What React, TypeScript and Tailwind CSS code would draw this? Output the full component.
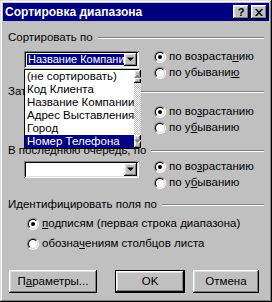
import React from 'react';

const raised =
  'shadow-[inset_-1px_-1px_#000,inset_1px_1px_#fff,inset_-2px_-2px_#808080,inset_2px_2px_#dfdfdf]';
const sunken =
  'shadow-[inset_1px_1px_#808080,inset_-1px_-1px_#fff,inset_2px_2px_#000,inset_-2px_-2px_#dfdfdf]';

const items = [
  '(не сортировать)',
  'Код Клиента',
  'Название Компании',
  'Адрес Выставления',
  'Город',
  'Номер Телефона',
];

const Arrow = ({ up = false, gray = false }: { up?: boolean; gray?: boolean }) => (
  <svg width="7" height="5" viewBox="0 0 7 5" className="block">
    {gray && <path d={up ? 'M1 5h7L4.5 1.5z' : 'M1 1h7L4.5 4.5z'} fill="#fff" />}
    <path d={up ? 'M0 4h7L3.5 0.5z' : 'M0 0.5h7L3.5 4z'} fill={gray ? '#808080' : '#000'} />
  </svg>
);

const Radio = ({ checked, children }: { checked?: boolean; children: React.ReactNode }) => (
  <div className="flex items-center h-[16px]">
    <div className="w-[12px] h-[12px] rounded-full border border-t-[#808080] border-l-[#808080] border-b-white border-r-white">
      <div className="w-full h-full rounded-full border border-t-black border-l-black border-b-[#dfdfdf] border-r-[#dfdfdf] bg-white flex items-center justify-center">
        {checked && <div className="w-[4px] h-[4px] rounded-full bg-black" />}
      </div>
    </div>
    <span className="ml-[3px] whitespace-nowrap">{children}</span>
  </div>
);

const GroupHeader = ({ title }: { title: string }) => (
  <div className="flex items-center h-[13px]">
    <span className="whitespace-nowrap">{title}</span>
    <div className="flex-1 ml-[5px] h-[2px] border-t border-t-[#808080] border-b border-b-white" />
  </div>
);

const Combo = ({ value }: { value?: string }) => (
  <div className={`w-[115px] h-[17px] bg-white p-[2px] flex ${sunken}`}>
    <div className="flex-1 flex items-center pl-[1px] overflow-hidden">
      {value && (
        <span className="bg-[#000080] text-white text-[11px] pl-[1px] leading-[11px] whitespace-nowrap">{value}</span>
      )}
    </div>
    <div className={`w-[13px] h-full bg-[#c0c0c0] flex items-center justify-center ${raised}`}>
      <Arrow />
    </div>
  </div>
);

const Btn = ({ children, def, w }: { children: React.ReactNode; def?: boolean; w: string }) => (
  <div className={`${w} h-[23px] ${def ? 'border border-black' : ''}`}>
    <div className={`w-full h-full bg-[#c0c0c0] flex items-center justify-center ${raised}`}>{children}</div>
  </div>
);

export default function App() {
  return (
    <div
      className={`relative w-[272px] h-[302px] bg-[#c0c0c0] p-[3px] text-[11.5px] text-black font-['Liberation_Sans',Arial,sans-serif] shadow-[inset_-1px_-1px_#000,inset_1px_1px_#dfdfdf,inset_-2px_-2px_#808080,inset_2px_2px_#fff]`}
    >
      {/* title bar */}
      <div className="h-[18px] bg-[#000080] flex items-center pl-[2px] pr-[2px]">
        <span className="flex-1 text-white font-bold text-[12px] whitespace-nowrap">Сортировка диапазона</span>
        <div className="flex gap-[2px]">
          <div className={`w-[16px] h-[14px] bg-[#c0c0c0] flex items-center justify-center font-bold text-[11px] leading-none ${raised}`}>?</div>
          <div className={`w-[16px] h-[14px] bg-[#c0c0c0] flex items-center justify-center ${raised}`}>
            <svg width="8" height="7" viewBox="0 0 8 7">
              <path d="M0 0h2l2 2.5L6 0h2L5 3.5 8 7H6L4 4.5 2 7H0l3-3.5z" fill="#000" />
            </svg>
          </div>
        </div>
      </div>

      <div className="px-[5px]">
        <div className="mt-[10px]">
          <GroupHeader title="Сортировать по" />
        </div>
        <div className="flex mt-[5px]">
          <div className="ml-[16px] mt-[2px]">
            <Combo value="Название Компании" />
          </div>
          <div className="ml-[15px] flex flex-col">
            <Radio checked>по возраста<u>н</u>ию</Radio>
            <Radio>по убывани<u>ю</u></Radio>
          </div>
        </div>

        <div className="mt-[4px]">
          <GroupHeader title="Затем по" />
        </div>
        <div className="flex mt-[6px]">
          <div className="ml-[16px]">
            <Combo />
          </div>
          <div className="ml-[15px] flex flex-col">
            <Radio checked>по во<u>з</u>растанию</Radio>
            <Radio>по у<u>б</u>ыванию</Radio>
          </div>
        </div>

        <div className="mt-[8px]">
          <GroupHeader title="В последнюю очередь, по" />
        </div>
        <div className="flex mt-[2px]">
          <div className="ml-[16px] mt-[2px]">
            <Combo />
          </div>
          <div className="ml-[15px] flex flex-col">
            <Radio checked>по во<u>з</u>растанию</Radio>
            <Radio>по у<u>б</u>ыванию</Radio>
          </div>
        </div>

        <div className="mt-[7px]">
          <GroupHeader title="Идентифицировать поля по" />
        </div>
        <div className="ml-[19px] mt-[5px] flex flex-col gap-[4px]">
          <Radio checked><u>п</u>одписям (первая строка диапазона)</Radio>
          <Radio>обозна<u>ч</u>ениям столбцов листа</Radio>
        </div>

        <div className="flex mt-[18px] ml-[1px]">
          <Btn w="w-[88px]">П<u>а</u>раметры...</Btn>
          <div className="ml-[18px]">
            <Btn w="w-[70px]" def>OK</Btn>
          </div>
          <div className="ml-[8px]">
            <Btn w="w-[66px]">Отмена</Btn>
          </div>
        </div>
      </div>

      {/* open dropdown list of the first combo */}
      <div className="absolute left-[24px] top-[69px] w-[115px] h-[80px] bg-white border border-black flex">
        <div className="flex-1 flex flex-col">
          {items.map((it, i) => (
            <div
              key={it}
              className={`h-[13px] leading-[13px] pl-[2px] whitespace-nowrap overflow-hidden ${i === 5 ? 'bg-[#000080] text-white' : ''}`}
            >
              {it}
            </div>
          ))}
        </div>
        <div className="w-[13px] flex flex-col bg-[repeating-conic-gradient(#c0c0c0_0_25%,#fff_0_50%)] bg-[length:2px_2px]">
          <div className={`h-[13px] bg-[#c0c0c0] flex items-center justify-center ${raised}`}>
            <Arrow up gray />
          </div>
          <div className="flex-1" />
          <div className={`h-[13px] bg-[#c0c0c0] flex items-center justify-center ${raised}`}>
            <Arrow gray />
          </div>
        </div>
      </div>
    </div>
  );
}
